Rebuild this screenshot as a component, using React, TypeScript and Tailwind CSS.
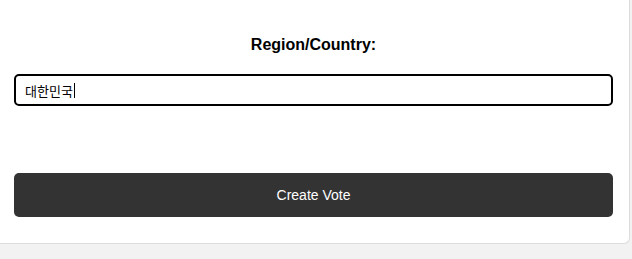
import { useState } from 'react'

export default function App() {
  const [region, setRegion] = useState('대한민국')

  return (
    <div className="min-h-[259px] bg-[#f2f2f2] font-['Liberation_Sans','Noto_Sans_CJK_KR',sans-serif]">
      <div className="w-[630px] bg-white border-r border-b border-[#dcdcdc] rounded-br-md pl-[14px] pr-[16px] pt-[36px] pb-[26px]">
        <label className="block text-center text-[16px] font-bold text-black leading-[18px]">
          Region/Country:
        </label>
        <div className="relative mt-[20px]">
          <input
            value={region}
            onChange={(e) => setRegion(e.target.value)}
            className="block w-full h-[32px] border-2 border-black rounded-[5px] pl-[9px] pr-[8px] text-[13px] text-black outline-none"
          />
          {/* fake caret, the screenshot shows the field focused */}
          <span className="pointer-events-none absolute left-[60px] top-[9px] w-px h-[15px] bg-black" />
        </div>
        <button className="mt-[67px] block w-full h-[44px] bg-[#333333] text-white text-[14px] rounded-[5px]">
          Create Vote
        </button>
      </div>
    </div>
  )
}
